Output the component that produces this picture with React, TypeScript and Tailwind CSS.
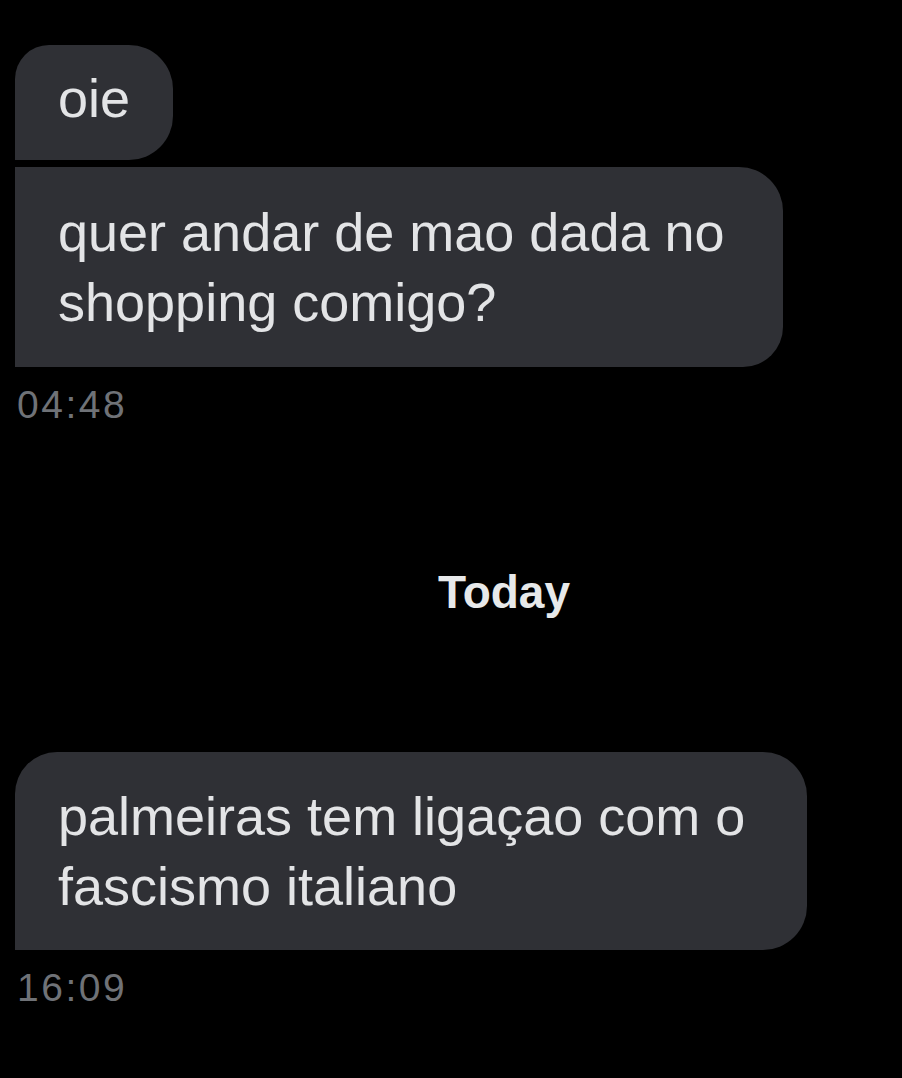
import React from 'react'

const font = { fontFamily: '"Liberation Sans", Arial, sans-serif' }

type BubbleProps = {
  lines: string[]
  className: string
}

function Bubble({ lines, className }: BubbleProps) {
  return (
    <div className={`bg-[#2f3035] pl-[43px] text-[54px] leading-[70px] text-[#e3e4e6] ${className}`}>
      {lines.map((line) => (
        <div key={line} className="whitespace-nowrap">
          {line}
        </div>
      ))}
    </div>
  )
}

function Stamp({ time }: { time: string }) {
  return (
    <p className="mt-[18px] pl-[2px] text-[39px] leading-[39px] tracking-[2.5px] text-[#6f7277]">
      {time}
    </p>
  )
}

export default function App() {
  return (
    <div className="min-h-[1078px] w-[902px] bg-black pt-[45px] pl-[15px]" style={font}>
      {/* earlier messages */}
      <div className="flex flex-col gap-[7px]">
        <Bubble
          lines={['oie']}
          className="w-[158px] pt-[18px] pb-[27px] rounded-tl-[34px] rounded-tr-[44px] rounded-br-[44px]"
        />
        <Bubble
          lines={['quer andar de mao dada no', 'shopping comigo?']}
          className="w-[768px] py-[30px] rounded-tr-[44px] rounded-br-[40px]"
        />
      </div>
      <Stamp time="04:48" />

      {/* day divider */}
      <div className="mt-[145px] flex justify-center pl-[91px]">
        <span className="text-[46px] font-bold leading-[46px] text-[#e7e9ea]">Today</span>
      </div>

      <div className="mt-[137px]">
        <Bubble
          lines={['palmeiras tem ligaçao com o', 'fascismo italiano']}
          className="w-[792px] pt-[29px] pb-[29px] rounded-tl-[42px] rounded-tr-[44px] rounded-br-[44px]"
        />
      </div>
      <Stamp time="16:09" />
    </div>
  )
}
